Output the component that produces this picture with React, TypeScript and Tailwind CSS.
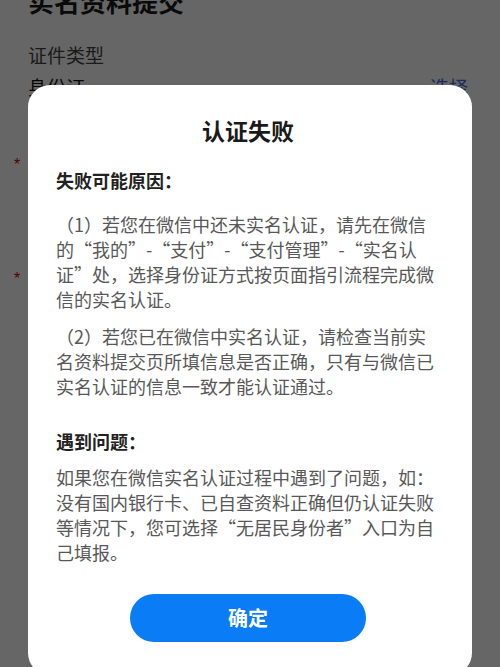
import React from "react";

const cjk = { fontFamily: '"Noto Sans CJK SC", "Noto Sans", sans-serif' };

export default function App() {
  return (
    <div className="relative w-[500px] h-[667px] overflow-hidden bg-white" style={cjk}>
      {/* Background page */}
      <div className="flex flex-col px-[28px]">
        <div className="mt-[-16px] text-[26px] leading-[34px] font-bold text-[#1a1a1a]">实名资料提交</div>
        <div className="mt-[24px] text-[19px] leading-[26px] text-[#444]">证件类型</div>
        <div className="mt-[6px] flex items-center justify-between text-[19px] leading-[26px]">
          <span className="text-[#111]">身份证</span>
          <span className="mr-[4px] text-[#4a6cd8]">选择</span>
        </div>
        <div className="mt-[58px] ml-[-14px] text-[16px] leading-[14px] text-[#d00000]" style={{ fontFamily: '"Liberation Sans", sans-serif' }}>*</div>
        <div className="mt-[100px] ml-[-14px] text-[16px] leading-[14px] text-[#d00000]" style={{ fontFamily: '"Liberation Sans", sans-serif' }}>*</div>
      </div>

      {/* Overlay */}
      <div className="absolute inset-0 bg-black/60 flex justify-center pt-[85px]">
        <div className="w-[444px] h-[590px] bg-white rounded-[22px] flex flex-col pl-[28px] pr-[32px] pt-[29px]">
          <div className="text-center text-[23px] leading-[32px] font-bold text-[#1a1a1a]">认证失败</div>
          <div className="mt-[22px] text-[18px] leading-[25px] font-bold text-[#222]">失败可能原因：</div>
          <p className="mt-[19px] text-[18px] leading-[25px] text-[#585858]">
            （1）若您在微信中还未实名认证，请先在微信的“我的”-“支付”-“支付管理”-“实名认证”处，选择身份证方式按页面指引流程完成微信的实名认证。
          </p>
          <p className="mt-[12px] text-[18px] leading-[25px] text-[#585858]">
            （2）若您已在微信中实名认证，请检查当前实名资料提交页所填信息是否正确，只有与微信已实名认证的信息一致才能认证通过。
          </p>
          <div className="mt-[30px] text-[18px] leading-[25px] font-bold text-[#222]">遇到问题：</div>
          <p className="mt-[11px] text-[18px] leading-[25px] text-[#585858]">
            如果您在微信实名认证过程中遇到了问题，如：没有国内银行卡、已自查资料正确但仍认证失败等情况下，您可选择“无居民身份者”入口为自己填报。
          </p>
          <div className="mt-[29px] flex justify-center">
            <button className="w-[236px] h-[48px] rounded-full bg-[#0a7cf6] text-white text-[20px] font-bold">
              确定
            </button>
          </div>
        </div>
      </div>
    </div>
  );
}
